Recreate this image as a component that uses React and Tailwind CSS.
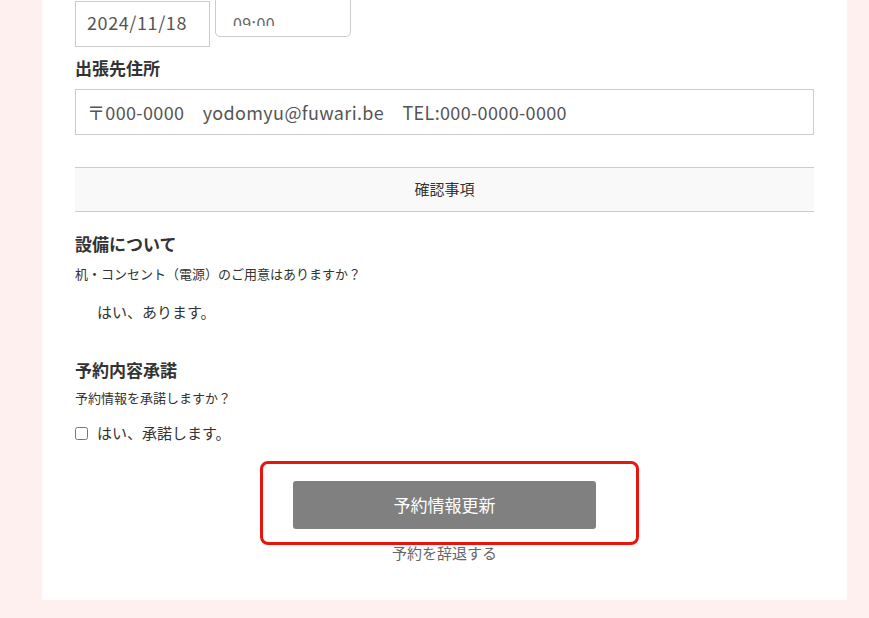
import React from "react";

export default function App() {
  const font = { fontFamily: '"Noto Sans CJK JP", "Noto Sans", sans-serif' };
  return (
    <div className="min-h-[618px] bg-[#fff0f0] overflow-hidden" style={font}>
      <div className="ml-[42px] w-[805px] bg-white px-[33px] pt-px pb-[37px]">
        {/* date/time row */}
        <div className="flex items-start gap-[5px] h-[46px]">
          <div className="w-[135px] h-[46px] border border-[#cccccc] px-[11px] text-[18px] leading-[40px] tracking-[0.6px] text-[#555555]">
            2024/11/18
          </div>
          <div className="w-[136px] h-[45px] -mt-[9px] border border-[#cccccc] rounded-[5px] pl-[17px] pt-[22px]">
            <div className="h-[11px] overflow-hidden text-[16px] leading-[16px] tracking-[0.4px] text-[#666666]">09:00</div>
          </div>
        </div>

        <div className="h-[42px] leading-[42px] text-[17px] font-bold text-[#333333]">出張先住所</div>

        <div className="h-[46px] border border-[#cccccc] px-[11px] text-[18px] leading-[44px] tracking-[0.35px] text-[#555555] whitespace-pre">
          〒000-0000　yodomyu@fuwari.be　TEL:000-0000-0000
        </div>

        <div className="mt-[32px] h-[45px] border-y border-[#cccccc] bg-[#f9f9f9] flex items-center justify-center text-[15px] text-[#333333]">
          確認事項
        </div>

        <div className="mt-[20px] h-[24px] leading-[24px] text-[17px] font-bold text-[#333333]">設備について</div>
        <div className="mt-[8px] h-[20px] leading-[20px] text-[13px] text-[#333333]">机・コンセント（電源）のご用意はありますか？</div>
        <div className="mt-[16px] h-[24px] leading-[24px] text-[15px] text-[#333333] pl-[22px]">はい、あります。</div>

        <div className="mt-[34px] h-[24px] leading-[24px] text-[17px] font-bold text-[#333333]">予約内容承諾</div>
        <div className="mt-[6px] h-[20px] leading-[20px] text-[13px] text-[#333333]">予約情報を承諾しますか？</div>
        <label className="mt-[13px] h-[24px] flex items-center gap-[9px] text-[15px] text-[#333333]">
          <input type="checkbox" className="m-0 w-[13px] h-[13px]" />
          <span className="leading-[24px]">はい、承諾します。</span>
        </label>

        <div className="relative mt-[16px] h-[84px] pt-[20px] flex justify-center">
          <button className="w-[303px] h-[48px] bg-[#808080] rounded-[3px] text-white text-[17px]">予約情報更新</button>
          <div className="absolute left-[185px] top-0 w-[379px] h-[84px] border-[3px] border-[#e8150e] rounded-[8px] pointer-events-none"></div>
        </div>

        <div className="-mt-[2px] h-[20px] leading-[20px] text-center text-[15px] text-[#666666]">予約を辞退する</div>
      </div>
    </div>
  );
}
